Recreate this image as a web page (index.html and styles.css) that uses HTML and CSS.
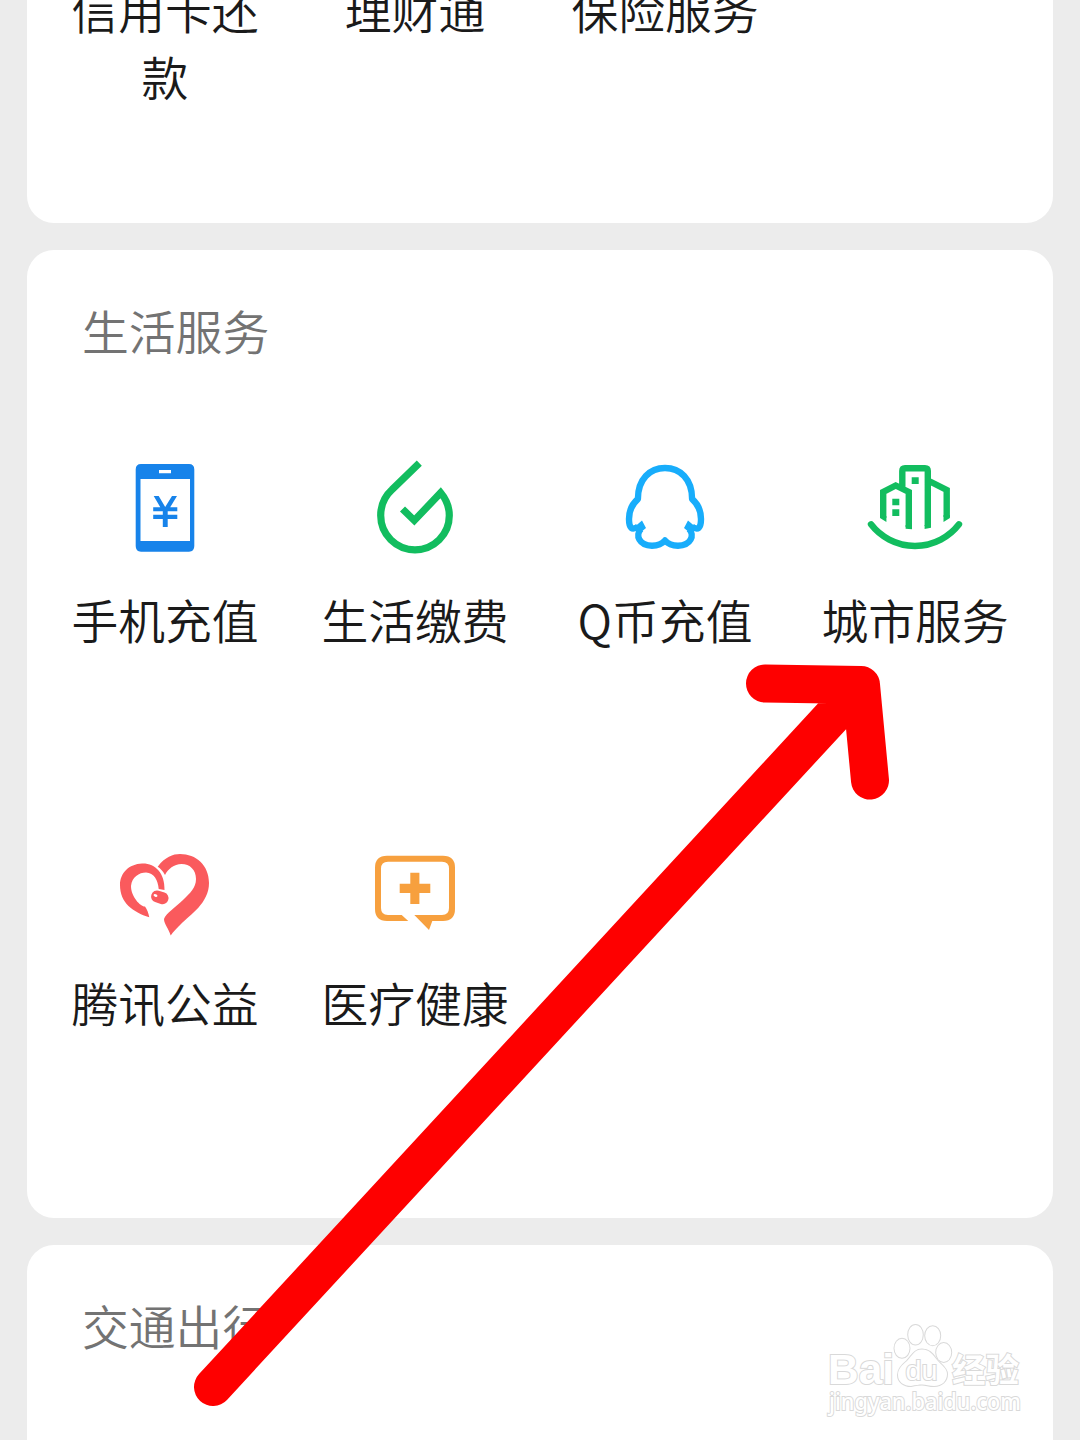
FILE: index.html
```html
<!DOCTYPE html>
<html lang="zh-CN">
<head>
<meta charset="utf-8">
<title>服务</title>
<link rel="stylesheet" href="styles.css">
</head>
<body>
<main class="page">
  <section class="card card-finance">
    <div class="grid">
      <div class="label">信用卡还款</div>
      <div class="label">理财通</div>
      <div class="label">保险服务</div>
    </div>
  </section>

  <section class="card card-life">
    <h2 class="title">生活服务</h2>
    <div class="grid services">
      <div class="item">
        <svg class="icon" viewBox="0 0 100 100" fill="#1783ea">
          <path fill-rule="evenodd" d="M26 6H74Q79.3 6 79.3 11.500V88Q79.300 93.700 74 93.700H26Q20.700 93.700 20.700 88V11.500Q20.700 6 26 6ZM25.500 21V83H75V21ZM44 12V15.300H56V12Z"/>
          <path d="M38.700 38H43.700L50.200 49L57 38H62L55.200 49.200H62.300V53.200H52.700V56.800H62.300V61H52.700V69H47.800V61H38.200V56.800H47.800V53.200H38.200V49.200H45.300Z"/>
        </svg>
        <div class="label">手机充值</div>
      </div>
      <div class="item">
        <svg class="icon" viewBox="0 0 100 100" fill="none" stroke="#12bd5f" stroke-width="7.200">
          <path d="M54.300 5.200L27 31.700C19 39 15.700 47 15.700 57.500A34.300 34.300 0 0 0 84.300 57.500C84.300 48 81 41 75.700 34.700L49.300 62.500L37.500 51"/>
        </svg>
        <div class="label">生活缴费</div>
      </div>
      <div class="item">
        <svg class="icon" viewBox="0 0 100 100" fill="none" stroke="#18adfb" stroke-width="6.400" stroke-linejoin="round">
          <path d="M23 68.500C17 73 14 70 14 61C14 54 16 47 22.900 41C22.900 21 35 10 50 10S77.100 21 77.100 41C84 47 86 54 86 61C86 70 83 73 77 68.500"/>
          <path d="M26 71C20 77 24 87.500 37 87.700C42 87.700 47 86 50 82.500C53 86 58 87.700 63 87.700C76 87.500 80 77 74 71"/>
          <path fill="#18adfb" stroke="none" d="M27 62.500L31 70L25 75L17 71ZM73 62.500L69 70L75 75L83 71Z"/>
        </svg>
        <div class="label">Q币充值</div>
      </div>
      <div class="item">
        <svg class="icon" viewBox="0 0 100 100" fill="none" stroke="#12bd5f" stroke-width="6.400">
          <path d="M37.300 30V13Q37.300 10.200 40 10.200H60Q62.800 10.200 62.800 13V68M18.200 60V34L30.700 27.500L43.800 34V69M64 23L81.700 32V59"/>
          <path fill="#12bd5f" stroke="none" d="M15 58H21.400V64L15 60ZM40.600 67H47V71.300L40.600 70.700ZM59.600 67H66V69.800L59.600 71ZM84.900 57H78.500V64L84.900 60Z"/>
          <path d="M6 66.300A55.500 55.500 0 0 0 94 66.300" stroke-linecap="round"/>
          <path fill="#12bd5f" stroke="none" d="M46.700 19.300h7v6.700h-7zM27.300 40.700h7v6.600h-7zM27.300 51.200h7v6.800h-7z"/>
        </svg>
        <div class="label">城市服务</div>
      </div>
      <div class="item">
        <svg class="icon" viewBox="0 0 100 100" fill="#fa5a5d">
          <path d="M42.700 25.700C50 16 58 13 65 13C81 13 94 24 94 42C94 62 75 74 66 83C62 87 58 91 55.700 94.500C54 88 49 83 49 78C51 72 61 66 68 59C75 52 81 47 81 38C81 29 75 23 66.500 23C59 23 53 28 50 34C48 30 45 27 42.700 25.700Z"/>
          <path d="M49.500 49C50 32 40 22 27 22.500C14 23 5 32 5 44C5 62 18 71 34.300 76.300C33.500 72 32 68 30 65.500C26 66 16 56 16 45C17 36 24 31.500 31 31.500C39 32 43 39 43.700 48Z"/>
          <rect x="36" y="50.300" width="17.600" height="12" rx="5.800" transform="rotate(18 44.700 56.300)"/>
          <ellipse cx="40.500" cy="54.500" rx="2" ry="1.300" fill="#fff" transform="rotate(20 40.500 54.500)"/>
        </svg>
        <div class="label">腾讯公益</div>
      </div>
      <div class="item">
        <svg class="icon" viewBox="0 0 100 100" fill="#f7a03e">
          <path d="M43.300 80H22Q10 80 10 68V26.700Q10 14.700 22 14.700H78Q90 14.700 90 26.700V68Q90 80 78 80H67.300L64 89L49.300 74H77Q84 74 84 67V27.700Q84 20.700 77 20.700H23Q16 20.700 16 27.700V67Q16 74 23 74H36.700Z"/>
          <path d="M45.300 31.700H54.400V42.700H65.300V52H54.400V63H45.300V52H34.700V42.700H45.300Z"/>
        </svg>
        <div class="label">医疗健康</div>
      </div>
    </div>
  </section>

  <section class="card card-travel">
    <h2 class="title">交通出行</h2>
  </section>

  <svg class="arrow" viewBox="0 0 1080 1440">
    <path d="M213 1387L861 685M765 683.500L861 685L870 780.500"/>
  </svg>

  <svg class="watermark" viewBox="810 1310 230 120">
    <g class="mark">
      <text class="brand" x="828" y="1384" font-size="43" textLength="66" lengthAdjust="spacingAndGlyphs">Bai</text>
      <ellipse cx="902" cy="1348.300" rx="7.500" ry="9.500"/>
      <ellipse cx="915.500" cy="1334.700" rx="7.300" ry="9.800"/>
      <ellipse cx="932.700" cy="1335.700" rx="7.500" ry="9.500"/>
      <ellipse cx="943.700" cy="1352.500" rx="7.500" ry="9.500"/>
      <path d="M922 1349.500C914 1349.500 912 1356 907 1361C902 1365 898 1369 898 1375C898 1382 904 1386 911 1386C916 1385 919 1384.500 922 1384.500C926 1384.500 929 1386 934 1386C942 1386 947 1381 947 1374C947 1368 941 1365 937 1360C933 1355 930 1349.500 922 1349.500Z"/>
      <text class="brand brand-du" x="905.500" y="1380" font-size="27" textLength="32" lengthAdjust="spacingAndGlyphs">du</text>
      <text class="brand-cn" x="952" y="1382" font-size="33.500">经验</text>
      <text class="site" x="829" y="1410" font-size="23" textLength="192" lengthAdjust="spacingAndGlyphs">jingyan.baidu.com</text>
    </g>
  </svg>
</main>
</body>
</html>
```
FILE: styles.css
```css
body {
  margin: 0;
  background: #ececec;
}

.page {
  position: relative;
  box-sizing: border-box;
  width: 1080px;
  height: 1440px;
  padding: 0 27px;
  overflow: hidden;
  display: flex;
  flex-direction: column;
  gap: 27px;
  font-family: "Noto Sans CJK SC", sans-serif;
  font-size: 46.8px;
  font-weight: 350;
  line-height: 66px;
  color: #1a1a1a;
}

.card {
  box-sizing: border-box;
  flex: none;
  padding: 47px 13px 0;
  background: #fff;
  border-radius: 27px;
}

.card-finance {
  height: 248px;
  margin-top: -25px;
  padding-top: 0;
  border-radius: 0 0 27px 27px;
  line-height: 67px;
}

.card-life {
  height: 968px;
}

.card-travel {
  height: 240px;
}

.title {
  margin: 0 0 0 42px;
  font-size: inherit;
  font-weight: inherit;
  color: #737373;
}

.grid {
  display: grid;
  grid-template-columns: repeat(4, 250px);
}

.services {
  margin-top: 95px;
  grid-auto-rows: 383px;
}

.item {
  display: flex;
  flex-direction: column;
  align-items: center;
  gap: 28px;
}

.icon {
  width: 100px;
  height: 100px;
}

.label {
  box-sizing: border-box;
  width: 250px;
  padding: 0 30px;
  text-align: center;
}

.arrow {
  position: absolute;
  inset: 0;
  width: 1080px;
  height: 1440px;
  fill: none;
  stroke: #fe0000;
  stroke-width: 38px;
  stroke-linecap: round;
  stroke-linejoin: round;
}

.watermark {
  position: absolute;
  left: 810px;
  top: 1310px;
  width: 230px;
  height: 120px;
}

.mark {
  fill: #fff;
  stroke: #d9d9d9;
  stroke-width: 2px;
  paint-order: stroke;
}

.brand {
  font-family: "Liberation Sans", sans-serif;
  font-weight: 700;
}

.brand-du {
  font-weight: 400;
}

.brand-cn {
  font-weight: 700;
}

.site {
  font-family: "Noto Sans", sans-serif;
  font-weight: 500;
}
```
